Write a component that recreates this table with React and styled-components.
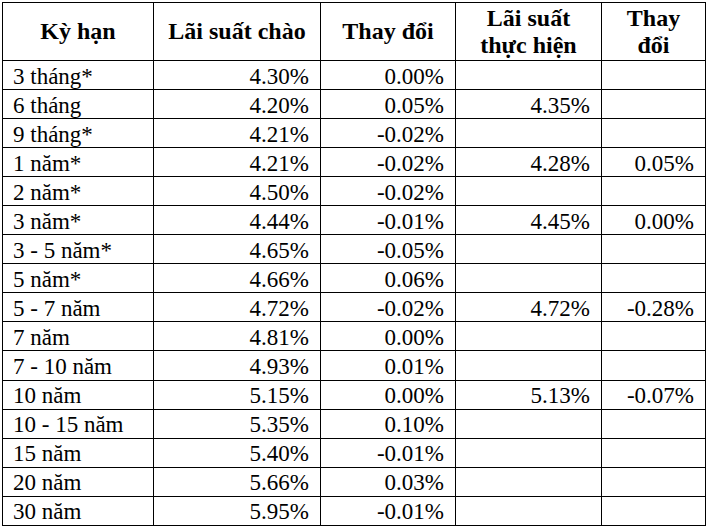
import React from "react";
import styled, { createGlobalStyle } from "styled-components";

const serif = `"Liberation Serif", "Times New Roman", Tinos, Times, serif`;

const Global = createGlobalStyle`
  html, body { margin: 0; padding: 0; background: #fff; }
  body { font-family: ${serif}; color: #000; }
`;

const Page = styled.div`
  padding: 2px 0 0 2px;
`;

const Table = styled.table`
  border-collapse: collapse;
  table-layout: fixed;
  width: 704px;
  font-family: ${serif};
  font-size: 23px;
  color: #000;
`;

const Col = styled.col`
  width: ${(p) => p.$w}px;
`;

const HeadCell = styled.th`
  border: 1px solid #000;
  height: 57px;
  padding: 0 2px;
  font-family: ${serif};
  font-size: 24px;
  font-weight: bold;
  text-align: center;
  vertical-align: middle;
  line-height: 27px;
  white-space: nowrap;
`;

const Row = styled.tr`
  height: 29.06px;
`;

const Cell = styled.td`
  border: 1px solid #000;
  padding: ${(p) => (p.$left ? "2px 0 0 10px" : "2px 11px 0 0")};
  font-family: ${serif};
  font-size: 23px;
  text-align: ${(p) => (p.$left ? "left" : "right")};
  vertical-align: middle;
  line-height: 25px;
  white-space: nowrap;
`;

const widths = [151, 167, 135, 146, 104];
const headers = [["Kỳ hạn"], ["Lãi suất chào"], ["Thay đổi"], ["Lãi suất", "thực hiện"], ["Thay", "đổi"]];

const rows = [
  ["3 tháng*", "4.30%", "0.00%", "", ""],
  ["6 tháng", "4.20%", "0.05%", "4.35%", ""],
  ["9 tháng*", "4.21%", "-0.02%", "", ""],
  ["1 năm*", "4.21%", "-0.02%", "4.28%", "0.05%"],
  ["2 năm*", "4.50%", "-0.02%", "", ""],
  ["3 năm*", "4.44%", "-0.01%", "4.45%", "0.00%"],
  ["3 - 5 năm*", "4.65%", "-0.05%", "", ""],
  ["5 năm*", "4.66%", "0.06%", "", ""],
  ["5 - 7 năm", "4.72%", "-0.02%", "4.72%", "-0.28%"],
  ["7 năm", "4.81%", "0.00%", "", ""],
  ["7 - 10 năm", "4.93%", "0.01%", "", ""],
  ["10 năm", "5.15%", "0.00%", "5.13%", "-0.07%"],
  ["10 - 15 năm", "5.35%", "0.10%", "", ""],
  ["15 năm", "5.40%", "-0.01%", "", ""],
  ["20 năm", "5.66%", "0.03%", "", ""],
  ["30 năm", "5.95%", "-0.01%", "", ""],
];

export default function App() {
  return (
    <Page>
      <Global />
      <Table>
        <colgroup>
          {widths.map((w, i) => (
            <Col key={i} $w={w} />
          ))}
        </colgroup>
        <thead>
          <tr>
            {headers.map((h, i) => (
              <HeadCell key={i}>
                {h.map((line, k) => (
                  <React.Fragment key={k}>
                    {k > 0 && <br />}
                    {line}
                  </React.Fragment>
                ))}
              </HeadCell>
            ))}
          </tr>
        </thead>
        <tbody>
          {rows.map((r, i) => (
            <Row key={i}>
              {r.map((c, j) => (
                <Cell key={j} $left={j === 0}>{c}</Cell>
              ))}
            </Row>
          ))}
        </tbody>
      </Table>
    </Page>
  );
}
